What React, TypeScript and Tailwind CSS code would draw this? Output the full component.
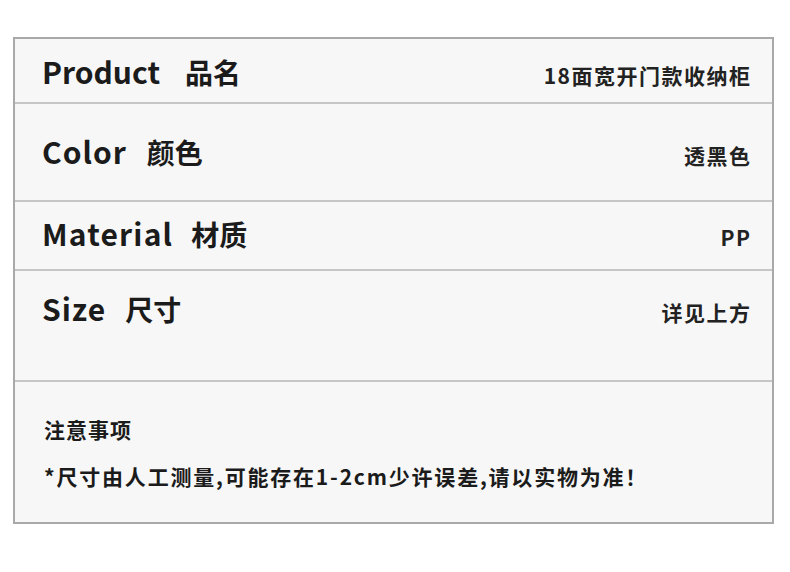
const font = { fontFamily: '"Noto Sans CJK SC", "Noto Sans", sans-serif' };

type Row = { en: string; zh: string; value: string; box: string; enClass: string; gap: string };

const rows: Row[] = [
  { en: "Product", zh: "品名", value: "18面宽开门款收纳柜", box: "h-[63px] pt-[17px]", enClass: "", gap: "ml-[25px]" },
  { en: "Color", zh: "颜色", value: "透黑色", box: "h-[98px] pt-[32px] border-t-2", enClass: "tracking-[1px]", gap: "ml-[20px]" },
  { en: "Material", zh: "材质", value: "PP", box: "h-[69px] pt-[16px] border-t-2", enClass: "tracking-[1.2px]", gap: "ml-[18px]" },
  { en: "Size", zh: "尺寸", value: "详见上方", box: "h-[111px] pt-[22px] border-t-2", enClass: "tracking-[1px]", gap: "ml-[19px]" },
];

function SpecRow({ row }: { row: Row }) {
  return (
    <div className={`flex items-baseline justify-between border-[#c6c6c6] pl-[27px] pr-[22px] ${row.box}`}>
      <div className="flex items-baseline text-[#1b1b1b] font-bold whitespace-nowrap">
        <span className={`text-[30px] leading-none ${row.enClass}`}>{row.en}</span>
        <span className={`text-[28px] leading-none ${row.gap}`}>{row.zh}</span>
      </div>
      <span className="text-[21px] font-bold leading-none text-[#222] tracking-[1.5px] -mr-[1.5px] whitespace-nowrap">
        {row.value}
      </span>
    </div>
  );
}

export default function App() {
  return (
    <div className="w-[790px] h-[572px] bg-white pt-[37px] pl-[13px]" style={font}>
      <div className="w-[761px] border-2 border-[#a9a9a9] bg-[#f7f7f7]">
        {rows.map((r) => (
          <SpecRow key={r.en} row={r} />
        ))}
        <div className="h-[142px] border-t-2 border-[#c6c6c6] pl-[29px] pt-[37px] text-[#1b1b1b] font-bold">
          <p className="text-[21px] leading-none tracking-[1px]">注意事项</p>
          <p className="text-[21px] leading-none mt-[26px] tracking-[1.8px] whitespace-nowrap">
            *尺寸由人工测量,可能存在1-2cm少许误差,请以实物为准！
          </p>
        </div>
      </div>
    </div>
  );
}
